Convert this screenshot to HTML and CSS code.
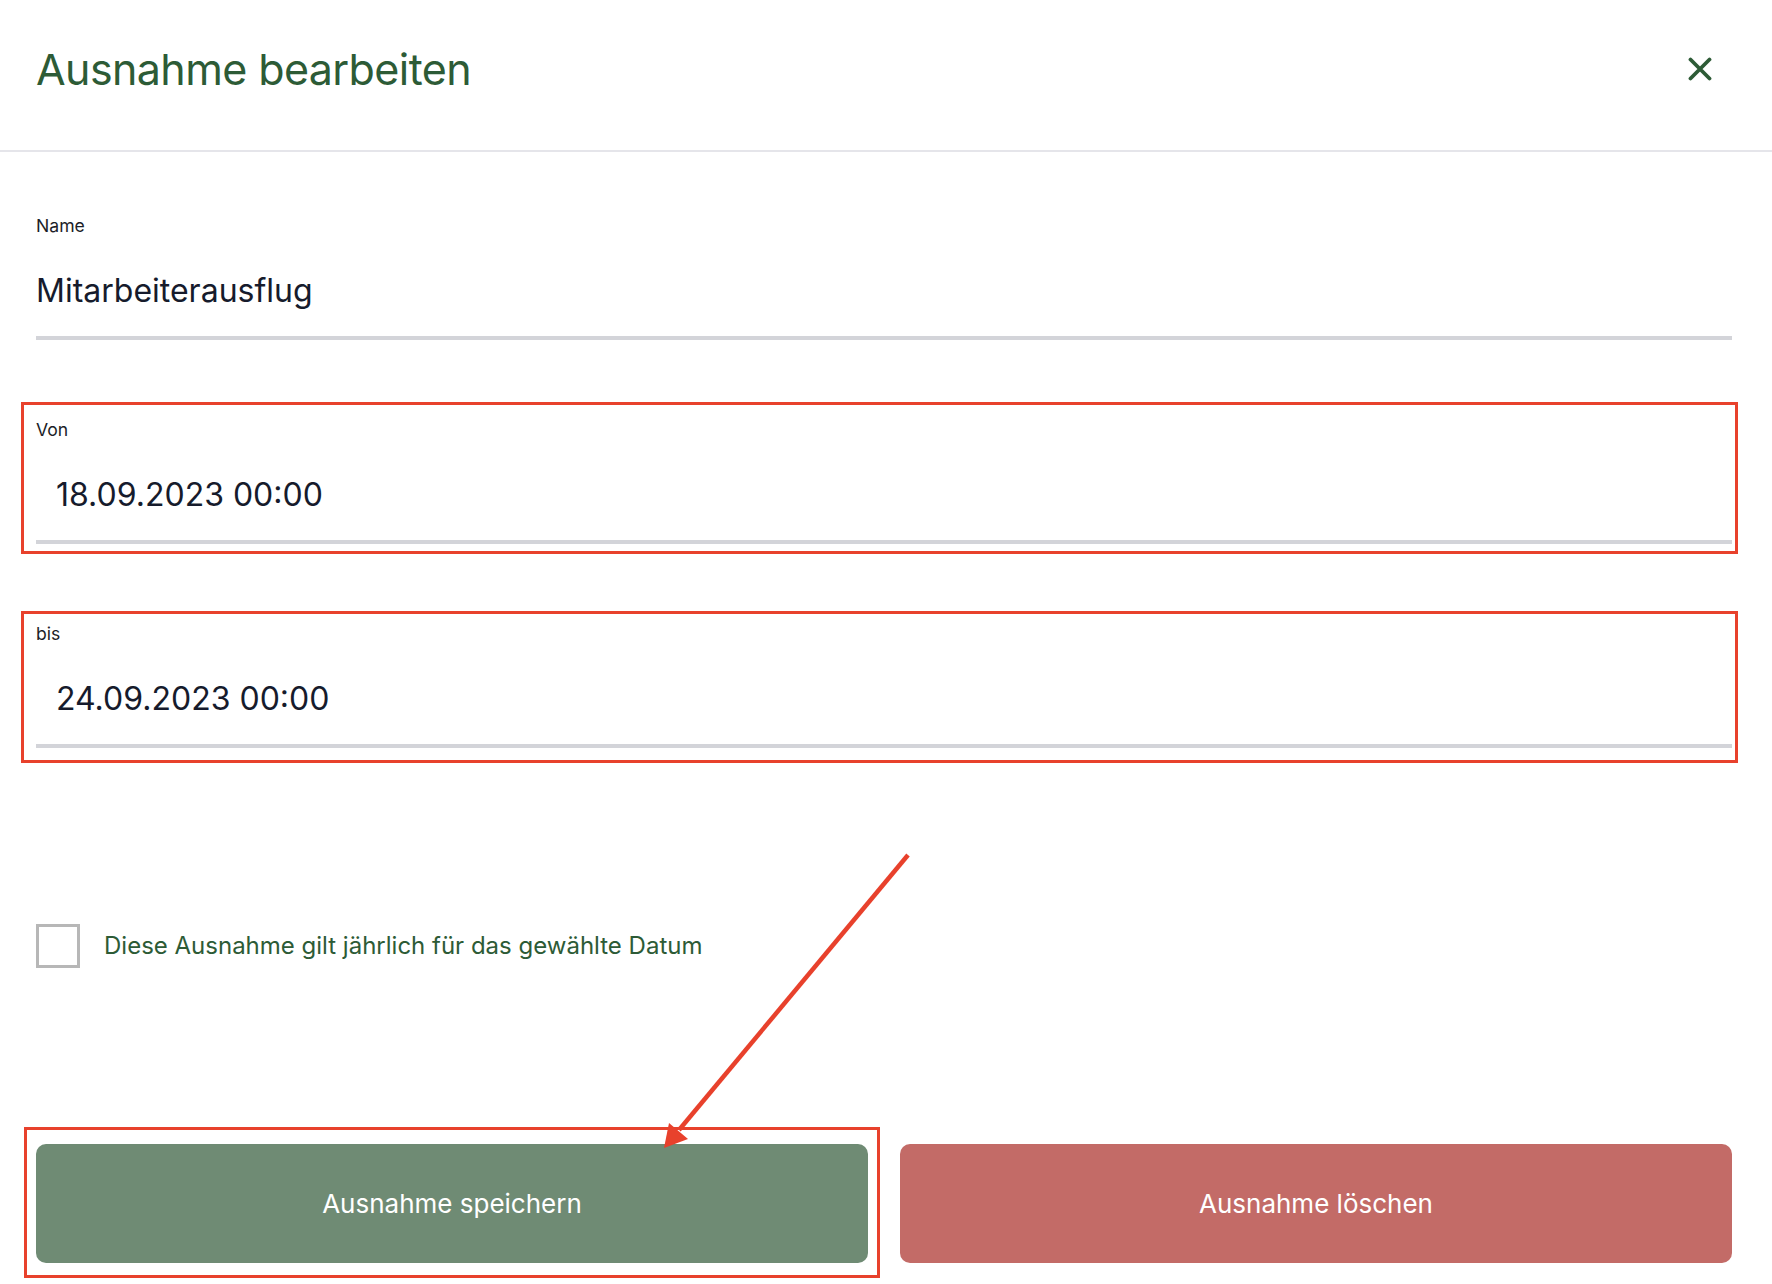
FILE: index.html
```html
<!DOCTYPE html>
<html lang="de">
<head>
<meta charset="utf-8">
<title>Ausnahme bearbeiten</title>
<link rel="stylesheet" href="styles.css">
</head>
<body>
<div class="modal">
  <header class="modal-header">
    <h1 class="title">Ausnahme bearbeiten</h1>
    <button class="close" aria-label="Schließen">
      <svg viewBox="0 0 24 24" width="24" height="24"><path d="M2.5 2.5 L21.5 21.5 M21.5 2.5 L2.5 21.5" stroke="#2d5b36" stroke-width="3.8" stroke-linecap="round" fill="none"/></svg>
    </button>
  </header>
  <main class="modal-body">
    <div class="field">
      <div class="label">Name</div>
      <div class="value">Mitarbeiterausflug</div>
    </div>
    <div class="field">
      <span class="mark mark-von"></span>
      <div class="label">Von</div>
      <div class="value value-date">18.09.2023 00:00</div>
    </div>
    <div class="field">
      <span class="mark mark-bis"></span>
      <div class="label">bis</div>
      <div class="value value-date">24.09.2023 00:00</div>
    </div>
    <div class="check-row">
      <span class="checkbox"></span>
      <span class="check-text">Diese Ausnahme gilt jährlich für das gewählte Datum</span>
    </div>
    <div class="actions">
      <div class="btn-wrap">
        <span class="mark mark-save"></span>
        <button class="btn btn-save">Ausnahme speichern</button>
      </div>
      <div class="btn-wrap">
        <button class="btn btn-delete">Ausnahme löschen</button>
      </div>
    </div>
  </main>
  <svg class="arrow" viewBox="0 0 1772 1284" width="1772" height="1284">
    <line x1="908" y1="855" x2="679" y2="1130" stroke="#e8412c" stroke-width="4.5"/>
    <polygon points="664,1148 669,1123 688,1139" fill="#e8412c"/>
  </svg>
</div>
</body>
</html>
```
FILE: styles.css
```css
* { box-sizing: border-box; }
html, body { margin: 0; padding: 0; background: #ffffff; }
body {
  font-family: Inter, "Noto Sans", "Liberation Sans", sans-serif;
  color: #161b2c;
}
.modal {
  position: relative;
  width: 1772px;
  min-height: 1284px;
  background: #ffffff;
}
.modal-header {
  display: flex;
  justify-content: space-between;
  align-items: center;
  padding: 43px 60px 55px 36px;
  border-bottom: 2px solid #e5e5ea;
}
.title {
  margin: 0;
  font-size: 43px;
  line-height: 52px;
  letter-spacing: -0.6px;
  font-weight: 400;
  color: #2d5b36;
}
.close {
  width: 24px;
  height: 24px;
  padding: 0;
  border: 0;
  background: none;
  display: flex;
}
.modal-body {
  padding: 64px 40px 0 36px;
  display: flex;
  flex-direction: column;
}
.field {
  position: relative;
  margin-bottom: 80px;
}
.label {
  font-size: 17.6px;
  line-height: 20px;
  color: #1c1e28;
  margin-bottom: 35px;
}
.value {
  font-size: 32px;
  line-height: 40px;
  padding-bottom: 25px;
  border-bottom: 4px solid #d3d4d9;
  color: #161b2c;
}
.value-date { padding-left: 20px; }
.mark {
  position: absolute;
  border: 3px solid #e8412c;
  pointer-events: none;
}
.mark-von { left: -15px; right: -6px; top: -18px; bottom: -10px; }
.mark-bis { left: -15px; right: -6px; top: -13px; bottom: -15px; }
.mark-save { left: -12px; right: -12px; top: -17px; bottom: -15px; }
.check-row {
  display: flex;
  align-items: center;
  gap: 24px;
  margin-top: 96px;
}
.checkbox {
  width: 44px;
  height: 44px;
  border: 3px solid #b7b7b7;
  background: #fff;
  flex: none;
}
.check-text {
  font-size: 24px;
  line-height: 44px;
  color: #2d5b36;
}
.actions {
  display: flex;
  gap: 32px;
  margin-top: 176px;
}
.btn-wrap {
  position: relative;
  flex: 1;
  display: flex;
}
.btn {
  flex: 1;
  height: 119px;
  border: 0;
  border-radius: 10px;
  font-family: Inter, "Noto Sans", "Liberation Sans", sans-serif;
  font-size: 26px;
  color: #ffffff;
  padding: 0;
}
.btn-save { background: #6f8b74; }
.btn-delete { background: #c36b67; }
.arrow {
  position: absolute;
  left: 0;
  top: 0;
  pointer-events: none;
}
```
